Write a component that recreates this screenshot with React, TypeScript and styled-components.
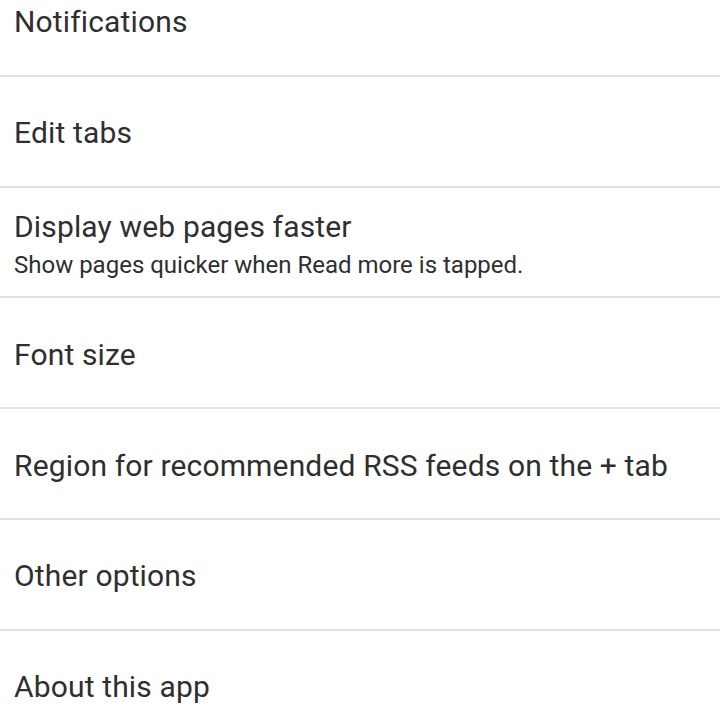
import React from 'react';
import styled, { createGlobalStyle } from 'styled-components';

const GlobalStyle = createGlobalStyle`
  html, body {
    margin: 0;
    padding: 0;
    background: #ffffff;
  }
  body {
    font-family: Roboto, "Noto Sans", sans-serif;
    overflow: hidden;
  }
`;

const List = styled.ul`
  list-style: none;
  margin: -34px 0 0 0;
  padding: 0;
  width: 720px;
`;

const Row = styled.li`
  height: 104.8px;
  box-sizing: content-box;
  border-bottom: 2px solid #e2e2e2;
  display: flex;
  flex-direction: column;
  justify-content: center;
  padding: 4px 14px 0;
`;

const Title = styled.div`
  font-size: 30px;
  letter-spacing: 0.15px;
  color: #2f2f2f;
  line-height: 38px;
  white-space: nowrap;
`;

const Summary = styled.div`
  font-size: 24px;
  color: #2f2f2f;
  line-height: 28px;
  margin-top: 5px;
  white-space: nowrap;
`;

interface ItemI {
  title: string;
  summary?: string;
}

const items: ItemI[] = [
  { title: 'Notifications' },
  { title: 'Edit tabs' },
  {
    title: 'Display web pages faster',
    summary: 'Show pages quicker when Read more is tapped.',
  },
  { title: 'Font size' },
  { title: 'Region for recommended RSS feeds on the + tab' },
  { title: 'Other options' },
  { title: 'About this app' },
];

export default function App(): JSX.Element {
  return (
    <>
      <GlobalStyle />
      <List>
        {items.map((item) => (
          <Row key={item.title}>
            <Title>{item.title}</Title>
            {item.summary && <Summary>{item.summary}</Summary>}
          </Row>
        ))}
      </List>
    </>
  );
}
